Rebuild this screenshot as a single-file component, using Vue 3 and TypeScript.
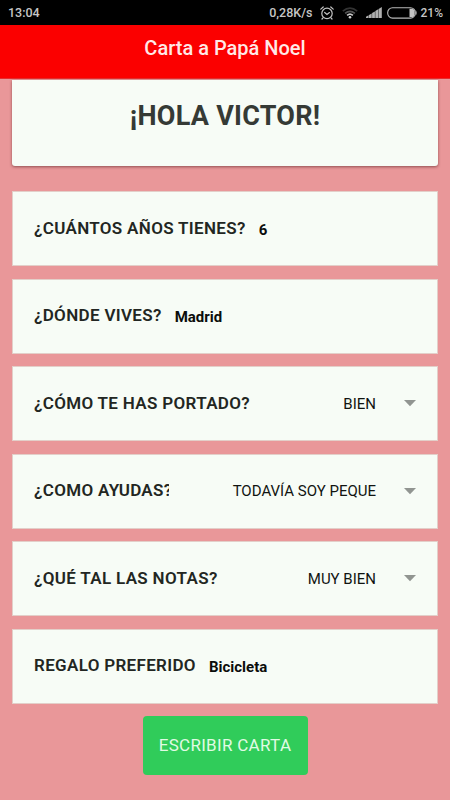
<script setup lang="ts">
interface Field {
  id: string
  label: string
  value: string
  kind: 'text' | 'select'
  clipped?: boolean
}

const fields: Field[] = [
  { id: 'age', label: '¿CUÁNTOS AÑOS TIENES?', value: '6', kind: 'text' },
  { id: 'city', label: '¿DÓNDE VIVES?', value: 'Madrid', kind: 'text' },
  { id: 'behaviour', label: '¿CÓMO TE HAS PORTADO?', value: 'BIEN', kind: 'select' },
  { id: 'help', label: '¿COMO AYUDAS?', value: 'TODAVÍA SOY PEQUE', kind: 'select', clipped: true },
  { id: 'grades', label: '¿QUÉ TAL LAS NOTAS?', value: 'MUY BIEN', kind: 'select' },
  { id: 'gift', label: 'REGALO PREFERIDO', value: 'Bicicleta', kind: 'text' },
]
</script>

<template>
  <div class="screen">
    <div class="status">
      <span class="clock">13:04</span>
      <span class="speed">0,28K/s</span>
      <svg class="alarm" width="14" height="14" viewBox="0 0 14 14" fill="none" stroke="#c4c4c4" stroke-width="1.2" stroke-linecap="round">
        <circle cx="7" cy="7.4" r="5.2" />
        <path d="M4.7 6.5 7 8.4l2.4-1.8M.8 3.1 3.2 1M13.2 3.1 10.8 1M3 11.8l-1 1.2M11 11.8l1 1.2" />
      </svg>
      <svg class="wifi" width="16" height="12" viewBox="0 0 16 12" fill="none" stroke-width="1.7">
        <path d="M.8 4.2Q8-2 15.2 4.2" stroke="#333" />
        <path d="M3.1 6.4Q8 2.4 12.9 6.4" stroke="#555" />
        <path d="M5.1 8.4Q8 5.7 10.9 8.4" stroke="#c8c8c8" />
        <circle cx="8" cy="10.3" r="1.3" fill="#d4d4d4" />
      </svg>
      <svg class="signal" width="16" height="11" viewBox="0 0 16 11" fill="#b0b0b0">
        <path d="M0 11V9.7L2.6 8.2V11zM3 11V7.9l2.7-1.5V11zM6.1 11V6.1l2.8-1.7V11zM9.3 11V4.1L12.2 2.3V11zM12.6 11V1.9L15.8 0v11z" />
      </svg>
      <svg class="battery" width="31" height="12" viewBox="0 0 31 12">
        <rect x=".7" y=".7" width="27.6" height="10.4" rx="4.8" fill="none" stroke="#b8b8b8" stroke-width="1.1" />
        <path d="M22.5 1.7h1.8q3.4 0 3.4 4.2t-3.4 4.2h-1.8z" fill="#c4c4c4" />
        <path d="M28.7 3q2 2.9 0 5.8z" fill="#b8b8b8" />
      </svg>
      <span class="percent">21%</span>
    </div>
    <header class="bar">Carta a Papá Noel</header>
    <main class="content">
      <h1 class="greeting"><span>¡HOLA VICTOR!</span></h1>
      <div v-for="field in fields" :key="field.id" class="row" :class="field.kind">
        <span class="label" :class="{ clipped: field.clipped }">{{ field.label }}</span>
        <span class="value">{{ field.value }}</span>
        <svg v-if="field.kind === 'select'" class="arrow" width="12" height="7" viewBox="0 0 12 7">
          <path d="M0 0h12L6 6.3z" fill="#919591" />
        </svg>
      </div>
      <button class="submit" type="button">ESCRIBIR CARTA</button>
    </main>
  </div>
</template>

<style>
body {
  margin: 0;
}
</style>

<style scoped>
.screen {
  box-sizing: border-box;
  width: 450px;
  height: 800px;
  overflow: hidden;
  background: #e99799;
  font-family: Roboto, "Liberation Sans", sans-serif;
}

.status {
  box-sizing: border-box;
  display: flex;
  align-items: center;
  height: 25px;
  padding: 0 8px;
  background: #000;
  color: #c6c6c6;
  font-size: 12.5px;
  font-weight: 500;
}

.speed {
  margin-left: auto;
}

.alarm {
  margin-left: 7px;
}

.wifi {
  margin-left: 8px;
}

.signal {
  margin-left: 8px;
}

.battery {
  margin-left: 5px;
}

.percent {
  margin-left: 3px;
  margin-right: -1px;
  font-size: 12px;
}

.bar {
  box-sizing: border-box;
  height: 54px;
  border-bottom: 1px solid #e52d2e;
  background: #fb0000;
  color: #ffe9e7;
  font-size: 20px;
  font-weight: 500;
  line-height: 46px;
  text-align: center;
}

.content {
  display: flex;
  flex-direction: column;
  gap: 12.5px;
  padding: 1px 12px 0;
}

.greeting {
  box-sizing: border-box;
  height: 86px;
  margin: 0 0 12.5px;
  padding-top: 20px;
  border-radius: 0 0 3px 3px;
  background: #f7fcf6;
  box-shadow: 0 1px 3px rgba(70, 20, 20, 0.55);
  color: #353a35;
  font-size: 27px;
  font-weight: 700;
  line-height: 32px;
  letter-spacing: 0.25px;
  text-align: center;
}

.row {
  box-sizing: border-box;
  display: flex;
  align-items: center;
  height: 75px;
  padding: 0 21px;
  border: 1px solid #e3cfc9;
  background: #f7fcf6;
}

.label {
  margin-top: -2px;
  color: #222622;
  font-size: 17px;
  font-weight: 600;
  line-height: 24px;
  letter-spacing: 0.33px;
  white-space: nowrap;
}

.label.clipped {
  width: 135px;
  overflow: hidden;
}

.text .value {
  margin: 2px 0 0 13px;
  color: #0b0d0b;
  font-size: 15px;
  font-weight: 700;
}

.select .value {
  margin: 0 0 0 auto;
  color: #111411;
  font-size: 15px;
  font-weight: 400;
}

.arrow {
  margin-left: 28px;
}

.submit {
  align-self: center;
  width: 165px;
  height: 59px;
  padding: 0 0 2px;
  border: 0;
  border-radius: 4px;
  background: #30cc5a;
  color: #e0fbe4;
  font-family: inherit;
  font-size: 17px;
  font-weight: 400;
  letter-spacing: 0.3px;
}
</style>
